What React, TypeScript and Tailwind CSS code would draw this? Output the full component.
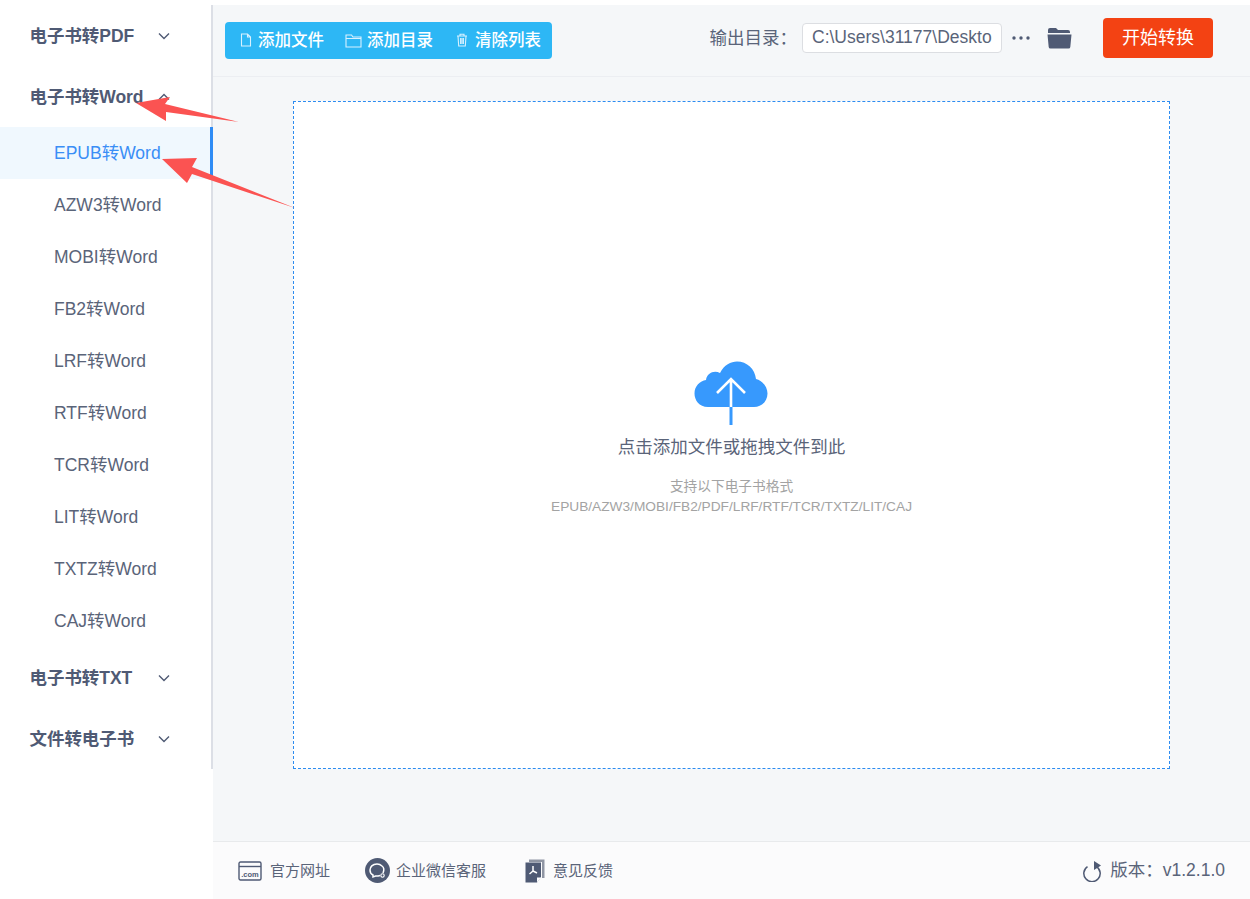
import React from "react";

const FONT = "font-['Liberation_Sans','Noto_Sans_CJK_SC',sans-serif]";

function Chevron({ up = false }: { up?: boolean }) {
  return (
    <svg width="12" height="8" viewBox="0 0 12 8" className={up ? "rotate-180" : ""}>
      <path d="M1 1.5 L6 6.5 L11 1.5" fill="none" stroke="#4f5a74" strokeWidth="1.4" />
    </svg>
  );
}

function Group({ label, up = false }: { label: string; up?: boolean }) {
  return (
    <div className="h-[61px] flex items-center pl-[30px] pt-[2px] relative">
      <span className="text-[17.5px] font-bold text-[#4f5a74] whitespace-nowrap tracking-[-0.05px] -ml-[0.5px]">{label}</span>
      <span className="absolute left-[158px] top-[27px] flex">
        <Chevron up={up} />
      </span>
    </div>
  );
}

const subs = ["AZW3转Word", "MOBI转Word", "FB2转Word", "LRF转Word", "RTF转Word", "TCR转Word", "LIT转Word", "TXTZ转Word", "CAJ转Word"];

function FileIcon() {
  return (
    <svg width="12" height="14" viewBox="0 0 12 14" fill="none" stroke="#d8f1ff" strokeWidth="1.1">
      <path d="M1.5 1 H7.5 L10.5 4 V13 H1.5 Z M7.5 1 V4 H10.5" />
    </svg>
  );
}
function FolderIcon() {
  return (
    <svg width="17" height="15" viewBox="0 0 17 15" fill="none" stroke="#d8f1ff" strokeWidth="1.1">
      <path d="M1 2 H6.5 L8 4 H16 V14 H1 Z M1 5.5 H16" />
    </svg>
  );
}
function TrashIcon() {
  return (
    <svg width="12" height="14" viewBox="0 0 12 14" fill="none" stroke="#d8f1ff" strokeWidth="1.1">
      <path d="M1 3 H11 M4 3 V1.3 H8 V3 M2 3 L2.7 13 H9.3 L10 3 M4.6 5 V11 M6 5 V11 M7.4 5 V11" />
    </svg>
  );
}

function Tool({ icon, label, className }: { icon: React.ReactNode; label: string; className: string }) {
  return (
    <div className={"flex items-center " + className}>
      {icon}
      <span className="text-[16.5px] text-white font-medium whitespace-nowrap">{label}</span>
    </div>
  );
}

export default function App() {
  return (
    <div className={"relative w-[1250px] h-[899px] overflow-hidden bg-white flex pt-[5px] " + FONT}>
      <aside className="w-[213px] shrink-0 self-stretch flex flex-col">
        <div className="h-[764px] border-r-2 border-[#dcdfe6] flex flex-col">
          <Group label="电子书转PDF" />
          <Group label="电子书转Word" up />
          <div className="h-[52px] bg-[#f0f8fe] flex items-center pl-[54px] text-[#3a8ef6] text-[17.5px] relative">
            EPUB转Word
            <span className="absolute right-[-2px] top-0 bottom-0 w-[3px] bg-[#2f8cf5]" />
          </div>
          {subs.map((s) => (
            <div key={s} className="h-[52px] flex items-center pl-[54px] text-[#5a6479] text-[17.5px]">
              {s}
            </div>
          ))}
          <Group label="电子书转TXT" />
          <Group label="文件转电子书" />
        </div>
      </aside>

      <main className="flex-1 flex flex-col bg-[#f5f7f9] min-w-0">
        <header className="h-[72px] shrink-0 border-b border-[#eceef2] flex items-center pl-3 pr-[37px]">
          <div className="h-[37px] w-[327px] bg-[#2db7f5] rounded flex items-center pl-[15px] mb-[1px]">
            <Tool icon={<FileIcon />} label="添加文件" className="gap-[6px]" />
            <Tool icon={<FolderIcon />} label="添加目录" className="gap-[5px] ml-[21px]" />
            <Tool icon={<TrashIcon />} label="清除列表" className="gap-[7px] ml-[23px]" />
          </div>
          <div className="ml-auto flex items-center mb-[6px]">
            <span className="text-[17.5px] text-[#5a6479] whitespace-nowrap pt-[1px]">输出目录：</span>
            <div className="ml-[5px] w-[200px] h-[30px] bg-white border border-[#dcdee2] rounded flex items-center pl-[9px] text-[17.5px] text-[#5a6479] overflow-hidden whitespace-nowrap">
              C:\Users\31177\Deskto
            </div>
            <svg width="20" height="6" viewBox="0 0 20 6" className="ml-[9px]">
              <circle cx="3" cy="3" r="1.7" fill="#4f5a74" />
              <circle cx="10" cy="3" r="1.7" fill="#4f5a74" />
              <circle cx="17" cy="3" r="1.7" fill="#4f5a74" />
            </svg>
            <svg width="25" height="22" viewBox="0 0 25 22" className="ml-[16px]">
              <path d="M1 3 Q1 1 3 1 H9 L11 3 H21 Q23 3 23 5 V6 H1 Z" fill="#4f5a74" />
              <path d="M0.5 7.5 H24.5 L23.3 20 Q23.2 21.5 21.5 21.5 H3.5 Q1.8 21.5 1.7 20 Z" fill="#4f5a74" />
            </svg>
            <button className="ml-[31px] w-[110px] h-[40px] rounded bg-[#f34213] text-white text-[18px] pt-[1px]">开始转换</button>
          </div>
        </header>

        <section className="flex-1 min-h-0 pt-[24px] px-[80px] pb-[73px]">
          <div className="h-full bg-white border border-dashed border-[#2d8cf0] flex flex-col items-center pt-[259px]">
            <svg width="74" height="64" viewBox="0 0 74 64" className="-ml-[1px]">
              <path d="M14 46 C5 46 0.5 39 0.5 32.5 C0.5 25 6 20 12 19 C13 12 20 9 26 12 C30 4 37 0.5 43 0.5 C53 0.5 61 8 62 18 C69 20 73.5 26 73.5 32.5 C73.5 40 68 46 60 46 Z" fill="#3799fd" />
              <path d="M37 64 V20 M23 32 L37 18 L51 32" fill="none" stroke="#fff" strokeWidth="2.6" />
              <path d="M37 46 V64" stroke="#3799fd" strokeWidth="3" />
            </svg>
            <div className="mt-[9px] text-[17.5px] leading-[26px] text-[#5a6479] whitespace-nowrap">点击添加文件或拖拽文件到此</div>
            <div className="mt-[17px] text-[13.7px] leading-[20px] text-[#a3a3a3] text-center whitespace-nowrap">
              支持以下电子书格式
              <br />
              EPUB/AZW3/MOBI/FB2/PDF/LRF/RTF/TCR/TXTZ/LIT/CAJ
            </div>
          </div>
        </section>

        <footer className="h-[58px] shrink-0 border-t border-[#e8eaec] bg-[#fbfbfc] flex items-center pl-[25px] pr-[25px] text-[#5a6479] mt-[-1px]">
          <svg width="24" height="20" viewBox="0 0 24 20" fill="none">
            <rect x="1" y="1" width="22" height="18" rx="1.5" stroke="#4f5a74" strokeWidth="1.4" />
            <path d="M1 5.5 H23" stroke="#4f5a74" strokeWidth="1.4" />
            <text x="12" y="15.5" fontSize="7.5" fontWeight="700" fill="#4f5a74" textAnchor="middle">.com</text>
          </svg>
          <span className="ml-[8px] text-[15px] pt-[1px]">官方网址</span>
          <svg width="25" height="25" viewBox="0 0 25 25" className="ml-[35px]">
            <circle cx="12.5" cy="12.5" r="12.5" fill="#4f5a74" />
            <path d="M12 6 C7.5 6 5 9 5 12 C5 14.5 6.5 16.3 8 17 L8 19 L10.5 18 C12 18.3 13.5 18 15 17.5 M18 15 C19.3 12 19 9.5 17 8 C16 7 14 6 12 6" fill="none" stroke="#fff" strokeWidth="1.5" />
            <circle cx="17.5" cy="17.5" r="1.7" fill="none" stroke="#fff" strokeWidth="1.1" />
          </svg>
          <span className="ml-[6px] text-[15px] pt-[1px]">企业微信客服</span>
          <svg width="20" height="24" viewBox="0 0 20 24" className="ml-[39px]">
            <path d="M4 0.5 H19.5 V19 H17 V3 H4 Z" fill="#8f95a3" />
            <path d="M0.5 3.5 H16 V18 L12 23.5 H0.5 Z" fill="#4f5a74" />
            <path d="M12 23.5 V18.5 H16 Z" fill="#fff" />
            <path d="M8 7 V12 M8 12 L4.5 15 M8 12 L12 14" stroke="#fff" strokeWidth="1.5" fill="none" />
          </svg>
          <span className="ml-[8px] text-[15px] pt-[1px]">意见反馈</span>
          <svg width="20" height="22" viewBox="0 0 20 22" className="ml-auto">
            <path d="M13.5 5.6 A8.2 8.2 0 1 1 4.5 5.6" fill="none" stroke="#4f5a74" strokeWidth="1.5" transform="translate(0 1)" />
            <path d="M11 1 L18 5.5 L11 10 Z" fill="#4f5a74" />
          </svg>
          <span className="ml-[7px] text-[17.5px] whitespace-nowrap">版本：v1.2.1.0</span>
        </footer>
      </main>

      <svg width="300" height="220" viewBox="0 0 300 220" className="absolute left-0 top-0 pointer-events-none">
        <polygon points="136,103 170,97 165,104 239,122 166,112 166,121" fill="#fb5352" />
        <polygon points="162,159 197,158 192,167 295,208 192,174 187,183" fill="#fb5352" />
      </svg>
    </div>
  );
}
